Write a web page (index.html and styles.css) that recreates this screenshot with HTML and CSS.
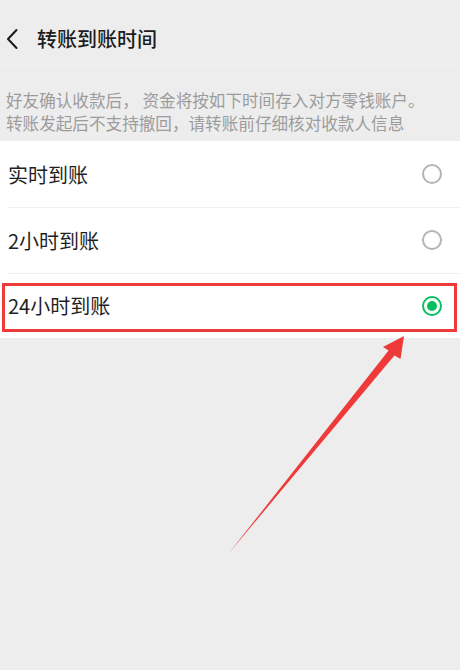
FILE: index.html
```html
<!DOCTYPE html>
<html lang="zh-CN">
<head>
<meta charset="utf-8">
<title>转账到账时间</title>
<link rel="stylesheet" href="styles.css">
</head>
<body>
<div class="page">
  <header class="nav">
    <svg class="back" width="14" height="22" viewBox="0 0 14 22"><path d="M11.5 2 L3 11 L11.5 20" fill="none" stroke="#1a1a1a" stroke-width="2" stroke-linecap="round" stroke-linejoin="round"/></svg>
    <h1 class="title">转账到账时间</h1>
  </header>
  <div class="navline"></div>
  <p class="desc">好友确认收款后， 资金将按如下时间存入对方零钱账户。<br>转账发起后不支持撤回，请转账前仔细核对收款人信息</p>
  <ul class="list">
    <li class="row"><span class="label">实时到账</span><span class="radio"></span></li>
    <li class="row"><span class="label">2小时到账</span><span class="radio"></span></li>
    <li class="row row-marked"><span class="label">24小时到账</span><span class="radio radio-on"></span></li>
  </ul>
  <svg class="arrow" width="460" height="670" viewBox="0 0 460 670">
    <polygon points="229,553 388.6,350.6 383,347 404,336 400.5,359 394.4,355.4" fill="#ef3a3a"/>
  </svg>
</div>
</body>
</html>
```

FILE: styles.css
```css
html, body {
  margin: 0;
  padding: 0;
  background: #ededed;
}
.page {
  position: relative;
  width: 460px;
  height: 670px;
  overflow: hidden;
  font-family: "Noto Sans CJK SC", "Noto Sans", sans-serif;
}
.nav {
  display: flex;
  align-items: center;
  height: 65px;
  padding: 13px 0 0 5px;
  box-sizing: border-box;
}
.back {
  display: block;
  margin-right: 18px;
}
.title {
  margin: 0;
  font-size: 20px;
  font-weight: 500;
  color: #1c1c1c;
  line-height: 26px;
}
.navline {
  height: 1px;
  background: #f2f2f2;
}
.desc {
  margin: 0;
  padding: 23px 0 6px 6px;
  font-size: 16.6px;
  line-height: 23px;
  color: #9c9c9c;
  white-space: nowrap;
}
.list {
  list-style: none;
  margin: 0;
  padding: 0;
  background: #ffffff;
}
.row {
  position: relative;
  display: flex;
  align-items: center;
  justify-content: space-between;
  height: 66px;
  padding: 0 18px 0 8px;
}
.row + .row::before {
  content: "";
  position: absolute;
  top: 0;
  left: 8px;
  right: 0;
  height: 1px;
  background: #efefef;
}
.label {
  font-size: 20px;
  color: #1f1f1f;
}
.radio {
  width: 20px;
  height: 20px;
  box-sizing: border-box;
  border: 2px solid #b4b4b4;
  border-radius: 50%;
  position: relative;
}
.radio-on {
  border-color: #07c160;
}
.radio-on::after {
  content: "";
  position: absolute;
  left: 3px;
  top: 3px;
  width: 10px;
  height: 10px;
  border-radius: 50%;
  background: #07c160;
}
.row-marked {
  height: 65px;
}
.row-marked::after {
  content: "";
  position: absolute;
  top: 10px;
  bottom: 6px;
  left: 2px;
  right: 3px;
  border: 3px solid #ef3a3a;
}
.arrow {
  position: absolute;
  left: 0;
  top: 0;
  pointer-events: none;
}
```
